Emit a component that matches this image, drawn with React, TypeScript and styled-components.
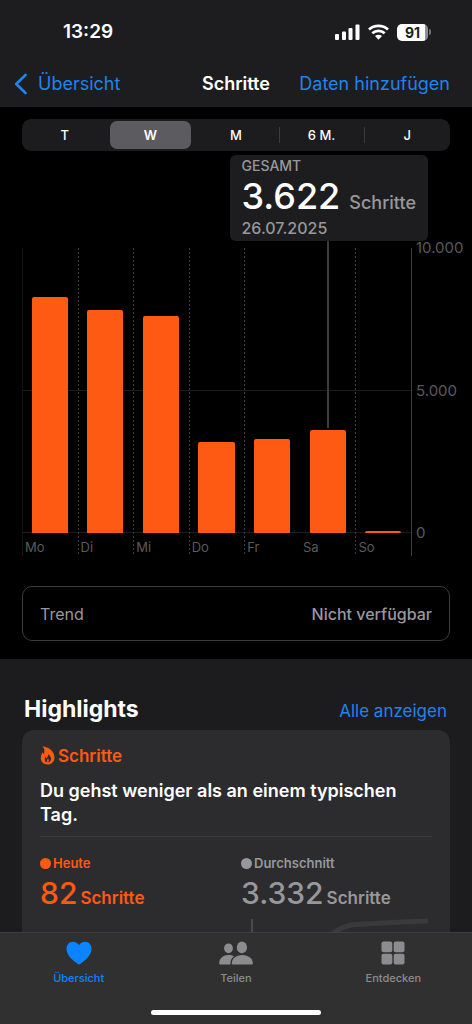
import React from "react";
import styled, { createGlobalStyle, css } from "styled-components";

const color = {
  bar: "#1d1d1f",
  black: "#000000",
  section: "#1c1c1e",
  card: "#2c2c2e",
  tabBar: "#303031",
  blue: "#1f84ee",
  orange: "#ff5a14",
  grey: "#98989c",
  dim: "#5a5a5e",
  line: "#3c3c3e",
  faint: "#1c1c1e",
};

const GlobalStyle = createGlobalStyle`
  *, *::before, *::after { box-sizing: border-box; }
  body {
    margin: 0;
    background: ${color.section};
    color: #fff;
    font-family: Inter, "Liberation Sans", sans-serif;
  }
  button, input { font: inherit; color: inherit; }
  h1, h2, p, dl, dt, dd, ul { margin: 0; padding: 0; }
`;

const Screen = styled.div`
  display: flex;
  flex-direction: column;
  height: 100vh;
`;

const Header = styled.header`
  flex: none;
  background: ${color.bar};
  padding-top: 16px;
`;

const StatusBar = styled.div`
  display: flex;
  align-items: center;
  justify-content: space-between;
  height: 32px;
  padding: 0 41px 0 63px;
`;

const Clock = styled.time`
  font-size: 19px;
  line-height: 24px;
  font-weight: 600;
`;

const StatusIcons = styled.div`
  display: flex;
  align-items: center;
  gap: 8px;
`;

const Battery = styled.span`
  display: flex;
  align-items: center;
  gap: 1px;
`;

const BatteryLevel = styled.span`
  width: 31px;
  height: 17px;
  border-radius: 5px;
  background: linear-gradient(90deg, #fff 91%, #8e8e92 91%);
  color: #1d1d1f;
  font-size: 14px;
  line-height: 17px;
  font-weight: 700;
  text-align: center;
`;

const BatteryCap = styled.span`
  width: 2px;
  height: 6px;
  border-radius: 0 2px 2px 0;
  background: #707074;
`;

const NavBar = styled.nav`
  display: grid;
  grid-template-columns: 1fr auto 1fr;
  align-items: center;
  height: 59px;
  padding: 12px 22px 0;
`;

const Title = styled.h1`
  font-size: 18px;
  line-height: 24px;
  font-weight: 600;
`;

const TextLink = styled.a`
  color: ${color.blue};
  font-size: 17px;
  line-height: 24px;
  text-decoration: none;
  white-space: nowrap;
`;

const BackLink = styled(TextLink)`
  display: flex;
  align-items: center;
  gap: 11px;
  margin-left: -8px;
  font-size: 18px;
`;

const NavAction = styled(TextLink)`
  justify-self: end;
  font-size: 18px;
`;

const Content = styled.main`
  flex: 1;
  min-height: 0;
  overflow-y: auto;
  scrollbar-width: none;
`;

const ChartSection = styled.section`
  display: flex;
  flex-direction: column;
  background: ${color.black};
  padding: 12px 22px 18px;
`;

const Segments = styled.div`
  display: flex;
  height: 32px;
  border-radius: 9px;
  background: ${color.faint};
`;

const Segment = styled.button<{ $selected?: boolean; $divided?: boolean }>`
  position: relative;
  flex: 1;
  margin: 2px;
  padding: 0;
  border: 0;
  border-radius: 7px;
  background: ${(p) => (p.$selected ? "#5b5b60" : "transparent")};
  font-size: 13px;
  line-height: 28px;
  font-weight: ${(p) => (p.$selected ? 600 : 500)};
  ${(p) =>
    p.$divided &&
    css`
      &::before {
        content: "";
        position: absolute;
        left: -2px;
        top: 6px;
        bottom: 6px;
        width: 1px;
        background: ${color.line};
      }
    `}
`;

const Callout = styled.div`
  align-self: flex-end;
  margin: 4px 22px 7px 0;
  padding: 1px 12px 2px;
  border-radius: 6px;
  background: ${color.bar};
  color: ${color.grey};
  font-weight: 500;
`;

const CalloutCaption = styled.p`
  font-size: 14px;
  line-height: 20px;
`;

const CalloutDate = styled.p`
  font-size: 16px;
  line-height: 22px;
`;

const CalloutValue = styled.p`
  display: flex;
  align-items: baseline;
  gap: 9px;
  font-size: 18px;
  line-height: 20px;

  strong {
    color: #fff;
    font-size: 36px;
    line-height: 41px;
    font-weight: 500;
  }
`;

const Chart = styled.div`
  display: flex;
  color: ${color.dim};
  font-size: 15px;
`;

const Plot = styled.div`
  position: relative;
  flex: 1;
  display: flex;
  box-shadow: inset 1px 0 #141415;
  border-right: 1px solid ${color.line};
`;

const GridLine = styled.span<{ $level: number }>`
  position: absolute;
  left: 0;
  right: 0;
  top: calc(${(p) => p.$level} * 142px);
  height: 1px;
  background: ${color.faint};
`;

const Day = styled.div<{ $divided?: boolean }>`
  position: relative;
  flex: 1;
  ${(p) =>
    p.$divided &&
    css`
      &::before {
        content: "";
        position: absolute;
        left: 0;
        top: 0;
        bottom: 0;
        width: 1px;
        background: repeating-linear-gradient(${color.line} 0 2px, transparent 2px 4px);
      }
    `}
`;

const BarTrack = styled.div`
  position: relative;
  display: flex;
  flex-direction: column;
  align-items: center;
  justify-content: flex-end;
  height: 285px;
`;

const Bar = styled.div`
  width: 65%;
  border-radius: 2px 2px 0 0;
  background: ${color.orange};
`;

const Leader = styled.span`
  position: absolute;
  top: -7px;
  left: 50%;
  width: 2px;
  margin-left: -1px;
  background: ${color.line};
`;

const DayLabel = styled.div`
  padding-left: 3px;
  height: 23px;
  font-size: 13px;
  line-height: 29px;
`;

const Axis = styled.div`
  display: flex;
  flex-direction: column;
  justify-content: space-between;
  width: 38px;
  height: 303px;
  margin-top: -9px;
  padding-left: 4px;
  line-height: 18px;
`;

const Trend = styled.dl`
  display: flex;
  align-items: center;
  justify-content: space-between;
  height: 55px;
  margin-top: 30px;
  padding: 0 17px;
  border: 1px solid ${color.line};
  border-radius: 10px;
  color: ${color.grey};
  font-size: 16px;
  line-height: 24px;

  dd {
    font-weight: 500;
  }
`;

const HighlightSection = styled.section`
  padding: 34px 22px 24px;
  background: ${color.section};
`;

const SectionHead = styled.div`
  display: flex;
  align-items: baseline;
  justify-content: space-between;
  height: 37px;
  padding: 0 3px 0 2px;
`;

const SectionTitle = styled.h2`
  font-size: 23px;
  line-height: 32px;
  font-weight: 700;
`;

const Card = styled.article`
  padding: 14px 18px 0;
  border-radius: 12px;
  background: ${color.card};
`;

const CardKind = styled.div`
  display: flex;
  align-items: center;
  gap: 3px;
  color: ${color.orange};
  font-size: 17px;
  line-height: 24px;
  font-weight: 600;
`;

const CardText = styled.p`
  padding: 11px 0 9px;
  border-bottom: 1px solid ${color.line};
  font-size: 18px;
  line-height: 24px;
  font-weight: 600;
`;

const Stats = styled.div`
  display: grid;
  grid-template-columns: 1fr 1fr;
  column-gap: 10px;
  padding-top: 17px;
`;

const Stat = styled.div<{ $tone: string }>`
  color: ${(p) => p.$tone};
  font-weight: 600;
`;

const StatName = styled.p`
  display: flex;
  align-items: center;
  gap: 2px;
  font-size: 13px;
  line-height: 18px;

  &::before {
    content: "";
    width: 11px;
    height: 11px;
    border-radius: 50%;
    background: currentColor;
  }
`;

const StatValue = styled.p`
  display: flex;
  align-items: baseline;
  gap: 3px;
  font-size: 17px;
  line-height: 20px;

  strong {
    font-size: 30px;
    line-height: 42px;
    font-weight: 500;
  }
`;

const Sparkline = styled.svg`
  display: block;
  width: 100%;
`;

const TabBar = styled.nav`
  flex: none;
  background: ${color.tabBar};
  border-top: 1px solid #3f3f41;
  padding-bottom: 9px;
`;

const Tabs = styled.ul`
  display: flex;
  list-style: none;
`;

const TabItem = styled.li`
  flex: 1;
`;

const Tab = styled.a<{ $active?: boolean }>`
  display: flex;
  flex-direction: column;
  align-items: center;
  gap: 5px;
  height: 77px;
  padding-top: 8px;
  color: ${(p) => (p.$active ? "#0a84ff" : "#8c8c8e")};
  font-size: 11px;
  line-height: 16px;
  font-weight: 500;
  text-decoration: none;
`;

const HomeIndicator = styled.div`
  width: 36%;
  height: 5px;
  margin: 0 auto;
  border-radius: 3px;
  background: #fff;
`;

const SignalIcon = () => (
  <svg width="25" height="16" viewBox="0 0 25 16" fill="#fff" aria-hidden="true">
    <rect x="0" y="10" width="4" height="6" rx="1" />
    <rect x="7" y="7.500" width="4" height="8.500" rx="1" />
    <rect x="13.500" y="4" width="4" height="12" rx="1" />
    <rect x="20.500" y="0.500" width="4" height="15.500" rx="1" />
  </svg>
);

const WifiIcon = () => (
  <svg width="21" height="16" viewBox="0 0 21 16" aria-hidden="true">
    <g fill="none" stroke="#fff" strokeWidth="2.700">
      <path d="M1 5.600C6.300 0.700 14.700 0.700 20 5.600" />
      <path d="M4.300 9.300C7.800 6 13.200 6 16.700 9.300" />
    </g>
    <path fill="#fff" d="M10.500 15.700L7 12.100C9 10.300 12 10.300 14 12.100Z" />
  </svg>
);

const BackIcon = () => (
  <svg width="13" height="22" viewBox="0 0 13 22" fill="none" aria-hidden="true">
    <path
      d="M11.500 2L2.200 11L11.500 20"
      stroke="#1f84ee"
      strokeWidth="2.600"
      strokeLinecap="round"
      strokeLinejoin="round"
    />
  </svg>
);

const FlameIcon = () => (
  <svg width="15" height="20" viewBox="0 0 15 20" aria-hidden="true">
    <path
      fill="#ff5a14"
      d="M2.700 0.500C8.200 0.700 14.500 5 14.500 11.500C14.500 15.800 11.500 18.500 7.600 18.500C3.700 18.500 0.800 15.900 0.800 12.100C0.800 9.900 1.600 7.700 2.700 6.200C2.900 7 3.300 7.600 3.900 7.900C4.900 5.500 4.500 2.500 2.700 0.500Z"
    />
    <path
      fill="#2c2c2e"
      d="M8 8.200C10 9.400 11 11.200 11 13.100C11 15 9.700 16.200 7.800 16.200C5.900 16.200 4.700 15 4.700 13.400C4.700 12.400 5 11.600 5.500 11C5.700 11.600 6 12 6.500 12.200C7.700 11.300 8.300 9.700 8 8.200Z"
    />
    <path fill="#ff5a14" d="M8 12.600C9 13.600 9.300 15.900 7.800 16C6.300 15.900 6.500 14.100 8 12.600Z" />
  </svg>
);

const HeartIcon = () => (
  <svg width="26" height="24" viewBox="0 0 26 24" fill="currentColor" aria-hidden="true">
    <path d="M13 23.500C12.500 23.500 11.900 23.100 11.200 22.600C4.600 17.700 0.500 13.300 0.500 7.800C0.500 3.500 3.300 0.700 7 0.700C9.600 0.700 11.800 2 13 4.300C14.200 2 16.400 0.700 19 0.700C22.700 0.700 25.500 3.500 25.500 7.800C25.500 13.300 21.400 17.700 14.800 22.600C14.100 23.100 13.500 23.500 13 23.500Z" />
  </svg>
);

const PeopleIcon = () => (
  <svg width="34" height="24" viewBox="0 0 34 24" fill="currentColor" aria-hidden="true">
    <ellipse cx="9.500" cy="7.300" rx="4.400" ry="4.900" />
    <path d="M0.200 22C0.200 17.500 4.400 14 9.500 14C11.700 14 13.500 14.400 15 15.300C12.700 17 11.200 19.500 11.400 23.500H1.700C0.700 23.500 0.200 23 0.200 22Z" />
    <ellipse cx="22.900" cy="6.400" rx="5.100" ry="5.900" />
    <path d="M12.800 22C12.800 17.700 17 14 23.200 14C29.500 14 33.800 17.700 33.800 22C33.800 23 33.300 23.500 32.300 23.500H14.300C13.300 23.500 12.800 23 12.800 22Z" />
  </svg>
);

const GridIcon = () => (
  <svg width="24" height="24" viewBox="0 0 24 24" fill="currentColor" aria-hidden="true">
    <rect x="0.500" y="0.500" width="10.800" height="10.800" rx="2" />
    <rect x="12.700" y="0.500" width="10.800" height="10.800" rx="2" />
    <rect x="0.500" y="12.700" width="10.800" height="10.800" rx="2" />
    <rect x="12.700" y="12.700" width="10.800" height="10.800" rx="2" />
  </svg>
);

const ranges = ["T", "W", "M", "6 M.", "J"];

const days = [
  { name: "Mo", steps: 8280 },
  { name: "Di", steps: 7830 },
  { name: "Mi", steps: 7600 },
  { name: "Do", steps: 3190 },
  { name: "Fr", steps: 3300 },
  { name: "Sa", steps: 3622 },
  { name: "So", steps: 82 },
];

const selectedDay = "Sa";
const share = (steps: number) => `${steps / 100}%`;

const tabs = [
  { name: "Übersicht", icon: <HeartIcon />, active: true },
  { name: "Teilen", icon: <PeopleIcon />, active: false },
  { name: "Entdecken", icon: <GridIcon />, active: false },
];

export default function App() {
  const [range, setRange] = React.useState("W");

  return (
    <Screen>
      <GlobalStyle />
      <Header>
        <StatusBar>
          <Clock>13:29</Clock>
          <StatusIcons>
            <SignalIcon />
            <WifiIcon />
            <Battery>
              <BatteryLevel>91</BatteryLevel>
              <BatteryCap />
            </Battery>
          </StatusIcons>
        </StatusBar>
        <NavBar>
          <BackLink href="#uebersicht">
            <BackIcon />
            Übersicht
          </BackLink>
          <Title>Schritte</Title>
          <NavAction href="#hinzufuegen">Daten hinzufügen</NavAction>
        </NavBar>
      </Header>

      <Content>
        <ChartSection>
          <Segments>
            {ranges.map((name, i) => (
              <Segment
                key={name}
                type="button"
                aria-pressed={name === range}
                $selected={name === range}
                $divided={i > 0 && name !== range && ranges[i - 1] !== range}
                onClick={() => setRange(name)}
              >
                {name}
              </Segment>
            ))}
          </Segments>

          <Callout>
            <CalloutCaption>GESAMT</CalloutCaption>
            <CalloutValue>
              <strong>3.622</strong> Schritte
            </CalloutValue>
            <CalloutDate>26.07.2025</CalloutDate>
          </Callout>

          <Chart>
            <Plot>
              <GridLine $level={1} />
              <GridLine $level={2} />
              {days.map((day, i) => (
                <Day key={day.name} $divided={i > 0 && day.name !== selectedDay}>
                  <BarTrack>
                    {day.name === selectedDay && (
                      <Leader style={{ bottom: `calc(${share(day.steps)} + 2px)` }} />
                    )}
                    <Bar style={{ height: share(day.steps) }} />
                  </BarTrack>
                  <DayLabel>{day.name}</DayLabel>
                </Day>
              ))}
            </Plot>
            <Axis>
              <span>10.000</span>
              <span>5.000</span>
              <span>0</span>
            </Axis>
          </Chart>

          <Trend>
            <dt>Trend</dt>
            <dd>Nicht verfügbar</dd>
          </Trend>
        </ChartSection>

        <HighlightSection>
          <SectionHead>
            <SectionTitle>Highlights</SectionTitle>
            <TextLink href="#alle">Alle anzeigen</TextLink>
          </SectionHead>
          <Card>
            <CardKind>
              <FlameIcon />
              Schritte
            </CardKind>
            <CardText>Du gehst weniger als an einem typischen Tag.</CardText>
            <Stats>
              <Stat $tone={color.orange}>
                <StatName>Heute</StatName>
                <StatValue>
                  <strong>82</strong> Schritte
                </StatValue>
              </Stat>
              <Stat $tone={color.grey}>
                <StatName>Durchschnitt</StatName>
                <StatValue>
                  <strong>3.332</strong> Schritte
                </StatValue>
              </Stat>
            </Stats>
            <Sparkline viewBox="0 0 392 80" fill="none" aria-hidden="true">
              <path d="M212 5V80" stroke="#4a4a4c" strokeWidth="2" />
              <path
                d="M266 60C278 34 290 15 311 11C334 9 360 8 388 7"
                stroke="#3a3a3c"
                strokeWidth="5"
              />
            </Sparkline>
          </Card>
        </HighlightSection>
      </Content>

      <TabBar>
        <Tabs>
          {tabs.map((tab) => (
            <TabItem key={tab.name}>
              <Tab href={`#${tab.name}`} $active={tab.active}>
                {tab.icon}
                {tab.name}
              </Tab>
            </TabItem>
          ))}
        </Tabs>
        <HomeIndicator />
      </TabBar>
    </Screen>
  );
}
